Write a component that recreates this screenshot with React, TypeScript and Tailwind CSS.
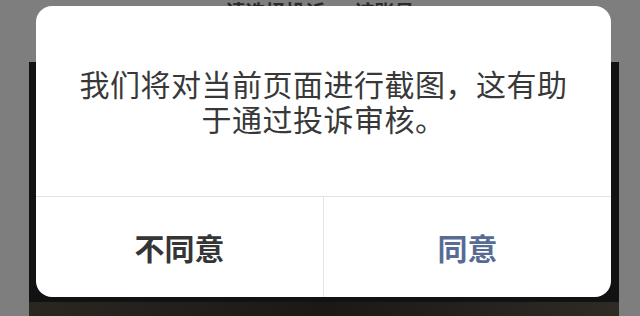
import React from 'react';

const cjk = { fontFamily: '"Noto Sans CJK SC", "Noto Sans", sans-serif' };

function ConfirmDialog() {
	return (
		<div
			className="absolute left-[36px] top-[6px] w-[575px] h-[291px] bg-white rounded-[16px] flex flex-col overflow-hidden"
			style={cjk}
		>
			<div className="h-[191px] flex flex-col items-center justify-center border-b border-[#e3e3e3] text-[30px] leading-[35px] tracking-[0.5px] text-[#383838] whitespace-nowrap">
				<div>我们将对当前页面进行截图，这有助</div>
				<div>于通过投诉审核。</div>
			</div>
			<div className="flex flex-1">
				<button className="w-[288px] flex items-center justify-center border-r border-[#e3e3e3] text-[30px] font-bold text-[#353535]">
					不同意
				</button>
				<button className="flex-1 flex items-center justify-center text-[30px] font-bold text-[#576b95]">
					同意
				</button>
			</div>
		</div>
	);
}

export default function App() {
	return (
		<div className="relative w-[640px] h-[316px] bg-[#7e7e7e] overflow-hidden">
			<div className="h-[6px] overflow-hidden flex justify-center items-end" style={cjk}>
				<div className="text-[20px] leading-[24px] font-bold text-[#2a2a2a] whitespace-nowrap -mb-[18px]">
					请选择投诉 · 该账号
				</div>
			</div>
			<div className="ml-[29px] mt-[56px] w-[590px] h-[260px] bg-[#121212] flex flex-col justify-end">
				<div className="h-[20px] bg-gradient-to-r from-[#2a2620] via-[#1c1814] to-[#2e2a24]" />
			</div>
			<ConfirmDialog />
		</div>
	);
}
